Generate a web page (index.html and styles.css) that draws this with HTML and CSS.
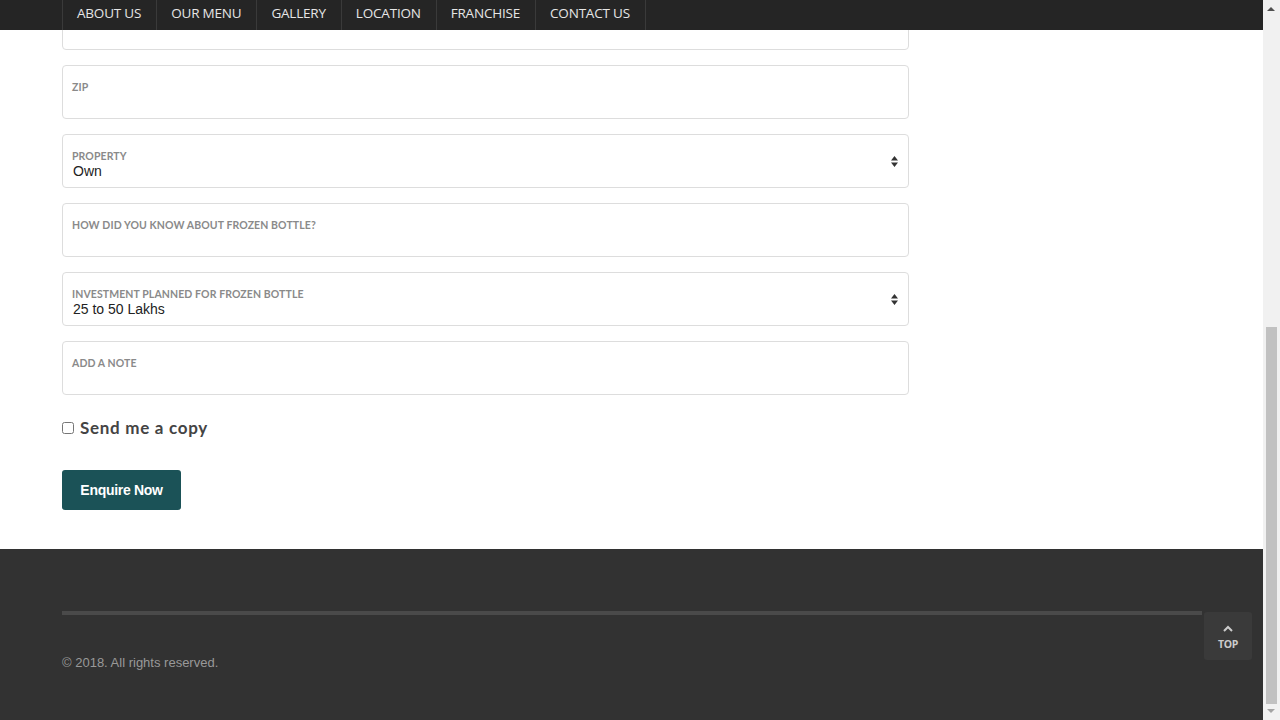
FILE: index.html
```html
<!DOCTYPE html>
<html lang="en">
<head>
    <meta charset="UTF-8">
    <meta name="viewport" content="width=device-width, initial-scale=1.0">
    <title>Franchise - Frozen Bottle</title>
    <link rel="stylesheet" href="styles.css">
</head>
<body>
    <!-- Top Navigation -->
    <nav class="topnav">
        <ul class="nav-list">
            <li><a href="#">About Us</a></li>
            <li><a href="#">Our Menu</a></li>
            <li><a href="#">Gallery</a></li>
            <li><a href="#">Location</a></li>
            <li><a href="#">Franchise</a></li>
            <li><a href="#">Contact Us</a></li>
        </ul>
    </nav>

    <div class="page">
        <!-- Franchise Form -->
        <section class="form-section">
            <div class="container">
                <form class="enquiry-form">
                    <div class="field">
                        <label>City</label>
                        <input type="text">
                    </div>
                    <div class="field">
                        <label>Zip</label>
                        <input type="text">
                    </div>
                    <div class="field field-select">
                        <label>Property</label>
                        <div class="select-value">Own</div>
                        <span class="select-arrows">
                            <svg width="7" height="11" viewBox="0 0 7 11"><path d="M3.5 0 L7 4.5 H0 Z M0 6.5 H7 L3.5 11 Z" fill="#333"/></svg>
                        </span>
                    </div>
                    <div class="field">
                        <label>How did you know about Frozen Bottle?</label>
                        <input type="text">
                    </div>
                    <div class="field field-select">
                        <label>Investment planned for Frozen Bottle</label>
                        <div class="select-value">25 to 50 Lakhs</div>
                        <span class="select-arrows">
                            <svg width="7" height="11" viewBox="0 0 7 11"><path d="M3.5 0 L7 4.5 H0 Z M0 6.5 H7 L3.5 11 Z" fill="#333"/></svg>
                        </span>
                    </div>
                    <div class="field">
                        <label>Add a note</label>
                        <input type="text">
                    </div>

                    <label class="copy-check">
                        <input type="checkbox">
                        <span>Send me a copy</span>
                    </label>

                    <button type="button" class="enquire-btn">Enquire Now</button>
                </form>
            </div>
        </section>

        <!-- Footer -->
        <footer class="footer">
            <div class="container">
                <div class="footer-line"></div>
                <p class="copyright">&copy; 2018. All rights reserved.</p>
            </div>
            <a href="#" class="to-top">
                <svg width="10" height="7" viewBox="0 0 10 7"><path d="M1 6 L5 2 L9 6" stroke="#ccc" stroke-width="2" fill="none"/></svg>
                <span>Top</span>
            </a>
        </footer>
    </div>

    <!-- fake browser scrollbar -->
    <div class="scrollbar">
        <span class="sb-arrow sb-up"></span>
        <span class="sb-thumb"></span>
        <span class="sb-arrow sb-down"></span>
    </div>
</body>
</html>
```

FILE: styles.css
```css
/* General Styles */
body {
    margin: 0;
    background-color: #fff;
    font-family: "Liberation Sans", Arial, sans-serif;
    overflow: hidden;
}

.container {
    width: 1140px;
    margin-left: 62px;
}

/* Top Navigation */
.topnav {
    position: fixed;
    top: 0;
    left: 0;
    right: 17px;
    height: 30px;
    background-color: #252525;
    z-index: 10;
}

.nav-list {
    list-style: none;
    margin: 0 0 0 62px;
    padding: 0;
    display: flex;
    height: 30px;
    border-left: 1px solid #3a3a3a;
}

.nav-list li {
    border-right: 1px solid #3a3a3a;
}

.nav-list a {
    display: block;
    padding: 0 15px 0 14px;
    line-height: 27px;
    color: #e6e6e6;
    text-decoration: none;
    text-transform: uppercase;
    font-family: "Open Sans", sans-serif;
    font-size: 13.5px;
    letter-spacing: -0.2px;
}

/* Page */
.page {
    margin-right: 17px;
}

.form-section {
    margin-top: -4px;
    padding-bottom: 39px;
}

.enquiry-form {
    width: 847px;
}

.field {
    position: relative;
    box-sizing: border-box;
    height: 54px;
    border: 1px solid #ddd;
    border-radius: 4px;
    padding: 14px 9px 0;
    margin-bottom: 15px;
}

.field label {
    display: block;
    font-family: Lato, sans-serif;
    font-size: 10.5px;
    font-weight: 700;
    color: #8a8a8a;
    text-transform: uppercase;
    letter-spacing: 0.1px;
    line-height: 14px;
}

.field input {
    border: none;
    outline: none;
    width: 100%;
    padding: 0;
    font-size: 14px;
    background: transparent;
}

.select-value {
    font-size: 14px;
    color: #222;
    line-height: 16px;
    margin-left: 1px;
}

.select-arrows {
    position: absolute;
    right: 10px;
    top: 21px;
    line-height: 0;
}

/* Checkbox */
.copy-check {
    display: flex;
    align-items: center;
    margin-top: 22px;
    cursor: pointer;
}

.copy-check input {
    width: 12px;
    height: 12px;
    margin: 0 6px 0 0;
}

.copy-check span {
    font-family: Lato, sans-serif;
    font-size: 17px;
    font-weight: 700;
    color: #444;
    letter-spacing: 0.7px;
}

/* Button */
.enquire-btn {
    display: block;
    margin-top: 32px;
    width: 119px;
    height: 40px;
    border: none;
    border-radius: 3px;
    background-color: #1b5257;
    color: #fff;
    font-family: "Liberation Sans", Arial, sans-serif;
    font-size: 14px;
    font-weight: 700;
    letter-spacing: -0.3px;
    cursor: pointer;
}

/* Footer */
.footer {
    position: relative;
    background-color: #323232;
    height: 171px;
    padding-top: 62px;
    box-sizing: border-box;
}

.footer-line {
    height: 4px;
    background-color: #4a4a4a;
}

.copyright {
    margin: 40px 0 0;
    font-size: 13px;
    color: #999;
}

.to-top {
    position: absolute;
    left: 1204px;
    top: 63px;
    width: 48px;
    height: 48px;
    border-radius: 3px;
    background-color: #3a3a3a;
    display: flex;
    flex-direction: column;
    align-items: center;
    justify-content: center;
    text-decoration: none;
    gap: 5px;
    padding-top: 4px;
    box-sizing: border-box;
}

.to-top span {
    font-family: "Open Sans", sans-serif;
    font-size: 10.5px;
    font-weight: 700;
    color: #ccc;
    text-transform: uppercase;
    letter-spacing: -0.3px;
}

/* Scrollbar */
.scrollbar {
    position: fixed;
    top: 0;
    right: 0;
    width: 17px;
    height: 720px;
    background-color: #f1f1f1;
}

.sb-thumb {
    position: absolute;
    left: 3px;
    top: 327px;
    width: 11px;
    height: 377px;
    background-color: #c1c1c1;
}

.sb-arrow {
    position: absolute;
    left: 4px;
    width: 0;
    height: 0;
    border-left: 4px solid transparent;
    border-right: 4px solid transparent;
}

.sb-up {
    top: 7px;
    border-bottom: 4px solid #505050;
}

.sb-down {
    bottom: 7px;
    border-top: 4px solid #a3a3a3;
}
```
